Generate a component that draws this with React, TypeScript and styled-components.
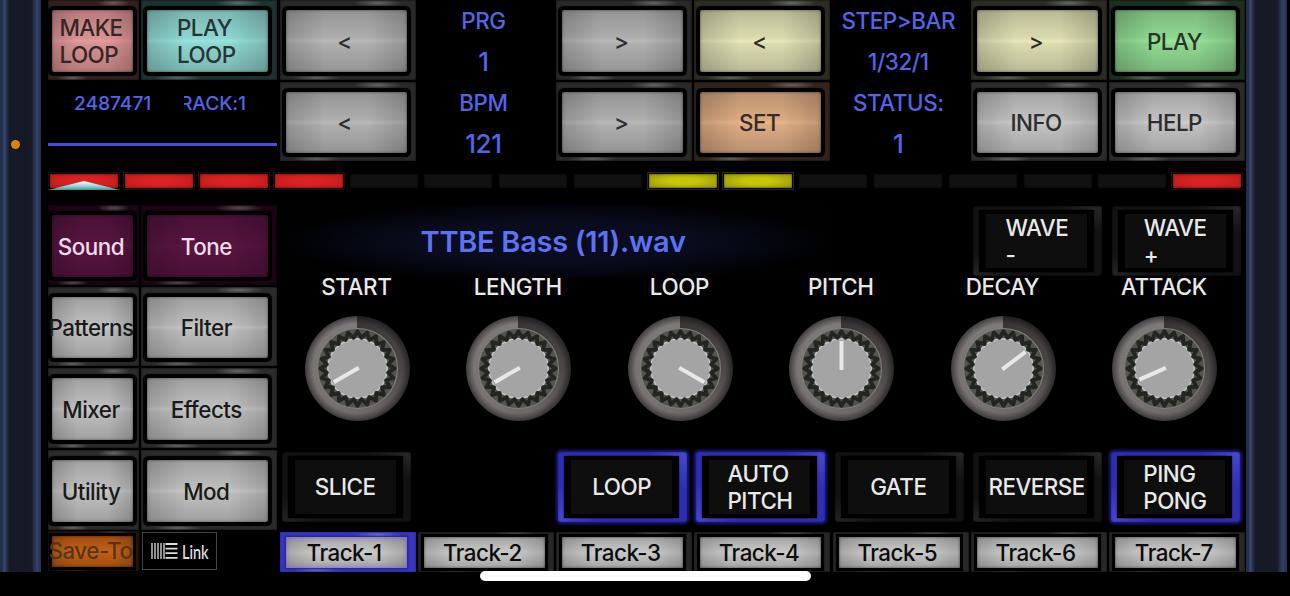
import styled, { createGlobalStyle } from "styled-components";

type PadItem = {
    label: string;
    face: string;
    tint: string;
    text?: string;
    narrow?: boolean;
};

const gray = { face: "#b9b9b9", tint: "#292929", text: "#2d2d2d" };
const silver = { face: "#cdcdcd", tint: "#2c2c2c", text: "#2d2d2d" };
const cream = { face: "#e8e8ba", tint: "#2d2c22", text: "#2d2d28" };
const menu = { face: "#c9c9c9", tint: "#2b2b2b", text: "#1a1a1a" };
const plum = { face: "#5b1543", tint: "#190513", text: "#f0dcea" };

const menuItems: PadItem[] = [
    { label: "Sound", narrow: true, ...plum },
    { label: "Tone", ...plum },
    { label: "Patterns", narrow: true, ...menu },
    { label: "Filter", ...menu },
    { label: "Mixer", narrow: true, ...menu },
    { label: "Effects", ...menu },
    { label: "Utility", narrow: true, ...menu },
    { label: "Mod", ...menu },
];

const steps = ["red", "red", "red", "red", "", "", "", "", "yellow", "yellow", "", "", "", "", "", "red"];

const knobs = [
    { name: "START", angle: 240 },
    { name: "LENGTH", angle: 240 },
    { name: "LOOP", angle: 120 },
    { name: "PITCH", angle: 0 },
    { name: "DECAY", angle: 53 },
    { name: "ATTACK", angle: 246 },
];

const toggles = [
    { label: "SLICE", on: false },
    null,
    { label: "LOOP", on: true },
    { label: "AUTO\nPITCH", on: true },
    { label: "GATE", on: false },
    { label: "REVERSE", on: false },
    { label: "PING\nPONG", on: true },
];

const tracks = [1, 2, 3, 4, 5, 6, 7];

// zigzag ring around the knob cap
const teeth = 24;
const zigzag = Array.from({ length: teeth * 2 }, (_, i) => {
    const a = (i * Math.PI) / teeth;
    const r = i % 2 === 0 ? 37.2 : 30.8;
    return `${(52.5 + r * Math.sin(a)).toFixed(2)},${(52.5 - r * Math.cos(a)).toFixed(2)}`;
}).join(" ");

function Pad({ label, face, tint, text, narrow }: PadItem){
    return(
        <PadFrame $tint={tint} $narrow={narrow}>
            <PadFace $face={face}>
                <PadText $color={text}>{label}</PadText>
            </PadFace>
        </PadFrame>
    );
}

function Knob({ name, angle }: { name: string; angle: number }){
    return(
        <KnobCell>
            <KnobName>{name}</KnobName>
            <KnobBody>
                <svg width="105" height="105" viewBox="0 0 105 105">
                    <circle cx="52.5" cy="52.5" r="40" fill="#53544c" stroke="#7f7e78" strokeWidth="1.1" />
                    <circle cx="52.5" cy="52.5" r="30.5" fill="#c4c4c4" />
                    <polygon points={zigzag} fill="none" stroke="#232522" strokeWidth="3.8" strokeLinejoin="round" />
                    <circle cx="52.5" cy="52.5" r="29" fill="#a4a4a4" />
                    <line x1="52.5" y1="54" x2="52.5" y2="25" stroke="#e8e8e8" strokeWidth="4" transform={`rotate(${angle} 52.5 52.5)`} />
                </svg>
            </KnobBody>
        </KnobCell>
    );
}

function App(){
    return(
        <Screen>
            <GlobalStyle />
            <Panel>
                <Rail>
                    <Dot />
                </Rail>
                <Deck>
                    <TopGrid>
                        <LoopArea>
                            <LoopButtons>
                                <Pad label={"MAKE\nLOOP"} face="#e69a9b" tint="#32201f" text="#332626" narrow />
                                <Pad label={"PLAY\nLOOP"} face="#98e3dd" tint="#1d3232" text="#263434" />
                            </LoopButtons>
                            <Meter>
                                <MeterValues>
                                    <Counter>2487471</Counter>
                                    <TrackName>TRACK:1</TrackName>
                                </MeterValues>
                                <MeterLine />
                            </Meter>
                        </LoopArea>
                        <PadPair>
                            <Pad label="<" {...gray} />
                            <Pad label="<" {...gray} />
                        </PadPair>
                        <Readout>
                            <ReadoutText>PRG</ReadoutText>
                            <ReadoutText $size={26}>1</ReadoutText>
                            <ReadoutText>BPM</ReadoutText>
                            <ReadoutText $size={26}>121</ReadoutText>
                        </Readout>
                        <PadPair>
                            <Pad label=">" {...gray} />
                            <Pad label=">" {...gray} />
                        </PadPair>
                        <PadPair>
                            <Pad label="<" {...cream} />
                            <Pad label="SET" face="#e8b58b" tint="#32241b" text="#352c25" />
                        </PadPair>
                        <Readout>
                            <ReadoutText>STEP&gt;BAR</ReadoutText>
                            <ReadoutText>1/32/1</ReadoutText>
                            <ReadoutText>STATUS:</ReadoutText>
                            <ReadoutText $size={26}>1</ReadoutText>
                        </Readout>
                        <PadPair>
                            <Pad label=">" {...cream} />
                            <Pad label="INFO" {...silver} />
                        </PadPair>
                        <PadPair>
                            <Pad label="PLAY" face="#98e599" tint="#1d301f" text="#263527" />
                            <Pad label="HELP" {...silver} />
                        </PadPair>
                    </TopGrid>
                    <StepRow>
                        {steps.map((color, i) => (
                            <Step key={i} $color={color}>
                                {i === 0 && (
                                    <svg width="72" height="9" viewBox="0 0 72 9">
                                        <defs>
                                            <linearGradient id="cursor" x1="0" y1="0" x2="0" y2="1">
                                                <stop offset="0" stopColor="#ffffff" />
                                                <stop offset="0.6" stopColor="#8fd5d2" />
                                                <stop offset="1" stopColor="#3f9494" />
                                            </linearGradient>
                                        </defs>
                                        <path d="M0 9 L36 0 L72 9 Z" fill="url(#cursor)" />
                                    </svg>
                                )}
                            </Step>
                        ))}
                    </StepRow>
                    <Body>
                        <Menu>
                            <MenuGrid>
                                {menuItems.map((item) => (
                                    <Pad key={item.label} {...item} />
                                ))}
                            </MenuGrid>
                            <MenuFooter>
                                <SmallFrame $tint="#2e1505" $narrow>
                                    <SmallFace $face="#c45f14">
                                        <PadText $color="#55361d">Save-To</PadText>
                                    </SmallFace>
                                </SmallFrame>
                                <LinkBadge>
                                    <svg width="27" height="16" viewBox="0 0 27 16">
                                        <path d="M1 0V16M4 0V16M7 0V16M10 0V16M13 0V16" stroke="#dcdcdc" strokeWidth="1.3" />
                                        <path d="M14.5 1H26.5M14.5 5.6H26.5M14.5 10.2H26.5M14.5 14.8H26.5" stroke="#dcdcdc" strokeWidth="1.8" />
                                    </svg>
                                    <LinkText>Link</LinkText>
                                </LinkBadge>
                            </MenuFooter>
                        </Menu>
                        <Editor>
                            <EditorHead>
                                <FileDisplay>TTBE Bass (11).wav</FileDisplay>
                                <WaveButtons>
                                    <Toggle>
                                        <ToggleFace>{"WAVE\n-"}</ToggleFace>
                                    </Toggle>
                                    <Toggle>
                                        <ToggleFace>{"WAVE\n+"}</ToggleFace>
                                    </Toggle>
                                </WaveButtons>
                            </EditorHead>
                            <KnobRow>
                                {knobs.map((knob) => (
                                    <Knob key={knob.name} {...knob} />
                                ))}
                            </KnobRow>
                            <ToggleRow>
                                {toggles.map((item, i) => item ? (
                                    <Toggle key={i} $on={item.on}>
                                        <ToggleFace>{item.label}</ToggleFace>
                                    </Toggle>
                                ) : <span key={i} />)}
                            </ToggleRow>
                            <TrackRow>
                                {tracks.map((n) => (
                                    <SmallFrame key={n} $tint="#282828" $on={n === 1}>
                                        <SmallFace $face="#c9c9c9" $on={n === 1}>
                                            <PadText $color="#0c0c0c">Track-{n}</PadText>
                                        </SmallFace>
                                    </SmallFrame>
                                ))}
                            </TrackRow>
                        </Editor>
                    </Body>
                </Deck>
                <Rail />
            </Panel>
            <HomeBar />
        </Screen>
    );
}

export default App;

const GlobalStyle = createGlobalStyle`
    * {
        box-sizing: border-box;
    }
    body {
        margin: 0;
        background: #000;
        overflow: hidden;
        font-family: Inter, "Liberation Sans", sans-serif;
        font-weight: 550;
    }
`;

const Screen = styled.div`
    width: 1290px;
    height: 596px;
    display: flex;
    flex-direction: column;
    align-items: center;
    background: #000;
`;

const Panel = styled.div`
    width: 100%;
    height: 571px;
    padding-right: 3px;
    display: flex;
`;

const Rail = styled.div`
    width: 41px;
    height: 572px;
    flex: none;
    padding: 140px 0 0 11px;
    background: linear-gradient(90deg, #222c47 0, #263250 3px, #3a4a72 4px, #34436a 5px, #222b43 7px, #202940 8px, #151a27 9px, #141925 20px, #171b28 32px, #283351 34px, #2b3758 36px, #35456d 37px, #293557 39px, #28334f 41px);
`;

const Dot = styled.div`
    width: 9px;
    height: 9px;
    border-radius: 50%;
    background: #d58413;
`;

const Deck = styled.div`
    width: 1205px;
    flex: none;
    padding-left: 7px;
    display: flex;
    flex-direction: column;
`;

const TopGrid = styled.div`
    height: 161px;
    display: grid;
    grid-template-columns: 229.3px repeat(7, 136px);
    column-gap: 2.3px;
`;

const LoopArea = styled.div`
    display: flex;
    flex-direction: column;
`;

const LoopButtons = styled.div`
    display: grid;
    grid-template-columns: 91px 136px;
    grid-template-rows: 79.5px;
    column-gap: 2.3px;
`;

const PadPair = styled.div`
    display: grid;
    grid-template-rows: 79.5px 79.5px;
    row-gap: 2.2px;
`;

const highlights = `
    radial-gradient(ellipse 18% 4px at 72% 3px, rgba(255, 255, 255, 0.28), transparent),
    radial-gradient(ellipse 18% 3px at 27% calc(100% - 2px), rgba(255, 255, 255, 0.28), transparent)
`;

const PadFrame = styled.div<{ $tint: string; $narrow?: boolean }>`
    display: flex;
    min-width: 0;
    padding: ${(props) => props.$narrow ? "10px 6px 8px 4px" : "10px 9px 8px 6px"};
    background: ${highlights}, ${(props) => props.$tint};
    box-shadow: inset 0 0 2px #000;
    overflow: hidden;
`;

const PadFace = styled.div<{ $face: string }>`
    flex: 1;
    min-width: 0;
    padding: 1px 1px 0 0;
    display: flex;
    justify-content: center;
    align-items: center;
    border-radius: 2px;
    background:
        linear-gradient(90deg, rgba(0, 0, 0, 0.16), transparent 32%, transparent 68%, rgba(0, 0, 0, 0.16)),
        linear-gradient(180deg, rgba(0, 0, 0, 0.2), rgba(0, 0, 0, 0.06) 45%, transparent 50%, rgba(0, 0, 0, 0.06) 55%, rgba(0, 0, 0, 0.2)),
        ${(props) => props.$face};
    box-shadow: 0 0 1px 4px #000, inset 0 0 3px rgba(0, 0, 0, 0.5);
`;

const PadText = styled.span<{ $color?: string }>`
    flex: none;
    padding-right: 2px;
    color: ${(props) => props.$color};
    font-size: 22.4px;
    line-height: 27.3px;
    letter-spacing: -0.5px;
    white-space: pre;
`;

const Readout = styled.div`
    display: grid;
    grid-template-rows: repeat(4, 40.9px);
    align-items: center;
    justify-items: center;
    padding: 1px 5px 0 0;
`;

const ReadoutText = styled.span<{ $size?: number }>`
    color: #5265e6;
    font-size: ${(props) => props.$size || 22.4}px;
    line-height: 1;
    letter-spacing: -0.4px;
`;

const Meter = styled.div`
    padding-top: 12px;
    color: #5265e6;
    font-size: 19.3px;
    letter-spacing: -0.1px;
`;

const MeterValues = styled.div`
    height: 22px;
    display: flex;
    align-items: center;
    padding-left: 26px;
`;

const Counter = styled.span`
    width: 110px;
`;

const TrackName = styled.span`
    width: 62px;
    display: flex;
    justify-content: flex-end;
    overflow: hidden;
`;

const MeterLine = styled.div`
    height: 3px;
    margin-top: 29px;
    background: #4b4bdc;
`;

const StepRow = styled.div`
    display: flex;
    gap: 6.9px;
    padding: 0 2px;
    margin-top: 13px;
`;

const stepColors: Record<string, string> = {
    red: "radial-gradient(ellipse, #d92222 35%, #b91a1a 100%)",
    yellow: "radial-gradient(ellipse, #c6c50a 30%, #939208 100%)",
};

const Step = styled.div<{ $color: string }>`
    width: 68px;
    height: 14px;
    flex: none;
    background: ${(props) => stepColors[props.$color] || "#111111"};
    box-shadow: ${(props) => props.$color ? `inset 0 0 2px rgba(0, 0, 0, 0.7), 0 0 0 1px #000, 0 0 0 2px ${props.$color === "red" ? "#2b0505" : "#292902"}` : "inset 0 0 2px #000"};

    svg {
        display: block;
        margin: 7px 0 0 -2px;
    }
`;

const Body = styled.div`
    display: flex;
    gap: 2.3px;
    margin-top: 17px;
`;

const Menu = styled.div`
    width: 229.3px;
    flex: none;
`;

const MenuGrid = styled.div`
    display: grid;
    grid-template-columns: 91px 136px;
    grid-template-rows: repeat(4, 79.5px);
    gap: 2.2px 2.3px;
`;

const MenuFooter = styled.div`
    display: flex;
    gap: 3px;
    margin-top: 1px;

    > :first-child {
        width: 91px;
    }
`;

const SmallFrame = styled.div<{ $tint: string; $on?: boolean; $narrow?: boolean }>`
    height: 40px;
    display: flex;
    min-width: 0;
    padding: ${(props) => props.$narrow ? "5px 6px 4px 4px" : "5px 9px 4px 6px"};
    overflow: hidden;
    background: ${highlights}, ${(props) => props.$on ? "#3836bd" : props.$tint};
    box-shadow: inset 0 0 2px ${(props) => props.$on ? "#20208c" : "#000"};
`;

const SmallFace = styled.div<{ $face: string; $on?: boolean }>`
    flex: 1;
    min-width: 0;
    padding-right: 2px;
    display: flex;
    justify-content: center;
    align-items: center;
    background:
        linear-gradient(90deg, rgba(0, 0, 0, 0.16), transparent 25%, transparent 75%, rgba(0, 0, 0, 0.16)),
        linear-gradient(180deg, rgba(0, 0, 0, 0.18), transparent 50%, rgba(0, 0, 0, 0.18)),
        ${(props) => props.$face};
    box-shadow: ${(props) => props.$on
        ? "0 0 2px 1px #22208f, inset 0 0 5px #6b69cf"
        : "0 0 1px 3px #000, inset 0 0 3px rgba(0, 0, 0, 0.6)"};
`;

const LinkBadge = styled.div`
    width: 75px;
    height: 38px;
    margin-top: 1px;
    border: 1px solid #454545;
    display: flex;
    align-items: center;
    padding-left: 8px;
    gap: 4px;
`;

const LinkText = styled.span`
    width: 26px;
    color: #dcdcdc;
    font-family: Lato, sans-serif;
    font-size: 20px;
    font-weight: 600;
    line-height: 20px;
    transform: scaleX(0.72);
    transform-origin: left;
`;

const Editor = styled.div`
    width: 966px;
    display: flex;
    flex-direction: column;
`;

const EditorHead = styled.div`
    height: 71px;
    display: flex;
    justify-content: space-between;
`;

const FileDisplay = styled.div`
    width: 551px;
    height: 73px;
    display: flex;
    justify-content: center;
    align-items: center;
    padding: 0 4px 0 0;
    color: #5b72f2;
    font-size: 29px;
    font-weight: 600;
    letter-spacing: -0.3px;
    background: radial-gradient(ellipse 50% 56% at 50% 50%, #0a0d20 0, #090c1d 50%, #020308 90%, #010102 100%);
`;

const WaveButtons = styled.div`
    display: grid;
    grid-template-columns: repeat(2, 136px);
    column-gap: 2.3px;
    margin-top: 1px;
`;

const Toggle = styled.div<{ $on?: boolean }>`
    width: 129px;
    height: 70px;
    margin-left: 2px;
    padding: 8px 15px 8px 13px;
    display: flex;
    border-radius: 3px;
    background: ${(props) => props.$on
        ? "linear-gradient(45deg, #4a48d2, #302eb0 20%, #302eb0 80%, #4c4ad4)"
        : "linear-gradient(30deg, #262626, #121212 18%, #121212 80%, #2a2a2a)"};
    box-shadow: ${(props) => props.$on ? "0 0 3px 2px #1b1a80, inset 0 0 2px #1b1a80" : "inset 0 0 2px #000"};
`;

const ToggleFace = styled.div`
    flex: 1;
    display: flex;
    justify-content: center;
    align-items: center;
    background: #0e0e0e;
    color: #e8e8e8;
    font-size: 22.4px;
    line-height: 27.3px;
    letter-spacing: -0.5px;
    white-space: pre;
    box-shadow: -3px 0 1px 4px #000, 3px 0 1px 4px #000;
`;

const KnobRow = styled.div`
    display: grid;
    grid-template-columns: repeat(6, 161.5px);
    margin-left: -3px;
`;

const KnobCell = styled.div`
    display: flex;
    flex-direction: column;
    align-items: center;
`;

const KnobName = styled.span`
    height: 22px;
    color: #e8e8e8;
    font-size: 22.4px;
    line-height: 22px;
    letter-spacing: -0.4px;
    padding-right: 2px;
`;

const KnobBody = styled.div`
    width: 105px;
    height: 105px;
    margin-top: 18px;
    border-radius: 50%;
    background:
        radial-gradient(circle, transparent 60%, rgba(0, 0, 0, 0.5) 71%),
        conic-gradient(#393535, #4d4848 25%, #6c6766 45%, #777271 60%, #7e7a79);

    svg {
        display: block;
    }
`;

const ToggleRow = styled.div`
    display: grid;
    grid-template-columns: repeat(7, 136px);
    column-gap: 2.3px;
    margin-top: 31px;
`;

const TrackRow = styled.div`
    display: grid;
    grid-template-columns: repeat(7, 136px);
    column-gap: 2.3px;
    margin-top: 10px;
`;

const HomeBar = styled.div`
    width: 331px;
    height: 10px;
    border-radius: 5px;
    background: #fff;
`;
